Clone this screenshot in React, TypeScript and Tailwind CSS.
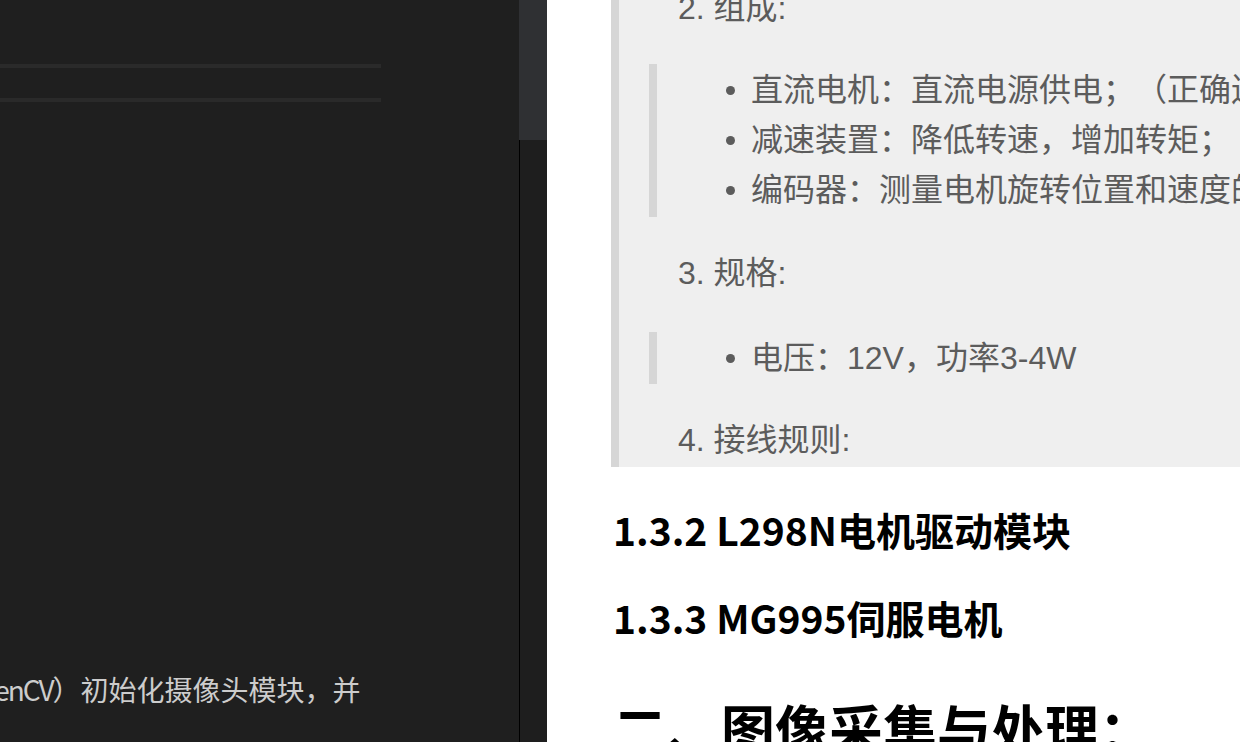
import React from 'react';

const bodyFont = "font-['Liberation_Sans','Noto_Sans_CJK_SC',sans-serif]";
const headFont = "font-['Noto_Sans_CJK_SC',sans-serif]";

function Bullet({ text }: { text: string }) {
    return (
        <li className="flex items-center h-[50px] whitespace-nowrap">
            <span className="w-[9px] h-[9px] rounded-full bg-[#5c5c5c] mr-[16px] shrink-0" />
            {text}
        </li>
    );
}

export default function App() {
    return (
        <div className="flex w-[1240px] h-[742px] overflow-hidden [text-spacing-trim:space-all]">

            {/* editor side */}
            <div className="w-[519px] shrink-0 bg-[#1f1f1f] overflow-hidden">
                <div className="mt-[64px] h-[4px] w-[381px] bg-[#2a2a2a]" />
                <div className="mt-[30px] h-[4px] w-[381px] bg-[#2a2a2a]" />
                <p className="mt-[567px] ml-[-40px] whitespace-nowrap text-[28px] leading-[40px] text-[#cccccc] font-['Noto_Sans_CJK_SC',sans-serif]">
                    <span className="tracking-[-2px]">OpenCV</span>）初始化摄像头模块，并
                </p>
            </div>

            {/* scrollbar */}
            <div className="w-[28px] shrink-0 flex flex-col bg-[#1e1e1e]">
                <div className="h-[140px] bg-[#2f3033]" />
                <div className="flex-1 border-l border-black" />
            </div>

            {/* preview side */}
            <div className={`flex-1 bg-white overflow-hidden pl-[64px] ${bodyFont}`}>
                <div className="-mt-[17px]">

                    <div className="border-l-8 border-[#d6d6d6] bg-[#efefef] pb-[2px] text-[32px] leading-[50px] text-[#5c5c5c]">
                        <p className="pl-[59px] whitespace-nowrap">2. 组成:</p>

                        <ul className="ml-[30px] mt-[31px] pt-px pb-[2px] pl-[69px] border-l-8 border-[#d6d6d6]">
                            <Bullet text="直流电机：直流电源供电；（正确连接正负极，电机正转）" />
                            <Bullet text="减速装置：降低转速，增加转矩；" />
                            <Bullet text="编码器：测量电机旋转位置和速度的传感器；" />
                        </ul>

                        <p className="pl-[59px] mt-[31px] whitespace-nowrap">3. 规格:</p>

                        <ul className="ml-[30px] mt-[34px] py-px pl-[69px] border-l-8 border-[#d6d6d6]">
                            <Bullet text="电压：12V，功率3-4W" />
                        </ul>

                        <p className="pl-[59px] mt-[31px] whitespace-nowrap">4. 接线规则:</p>
                    </div>

                    <h3 className={`ml-[2px] mt-[34px] text-[39px] leading-[56px] font-bold text-black whitespace-nowrap ${headFont}`}>
                        1.3.2 L298N电机驱动模块
                    </h3>

                    <h3 className={`ml-[2px] mt-[32px] text-[39px] leading-[56px] font-bold text-black whitespace-nowrap ${headFont}`}>
                        1.3.3 MG995伺服电机
                    </h3>

                    <h2 className={`ml-[2px] mt-[51px] text-[54px] leading-[64px] font-bold text-black whitespace-nowrap ${headFont}`}>
                        二、图像采集与处理：
                    </h2>

                </div>
            </div>
        </div>
    );
}
